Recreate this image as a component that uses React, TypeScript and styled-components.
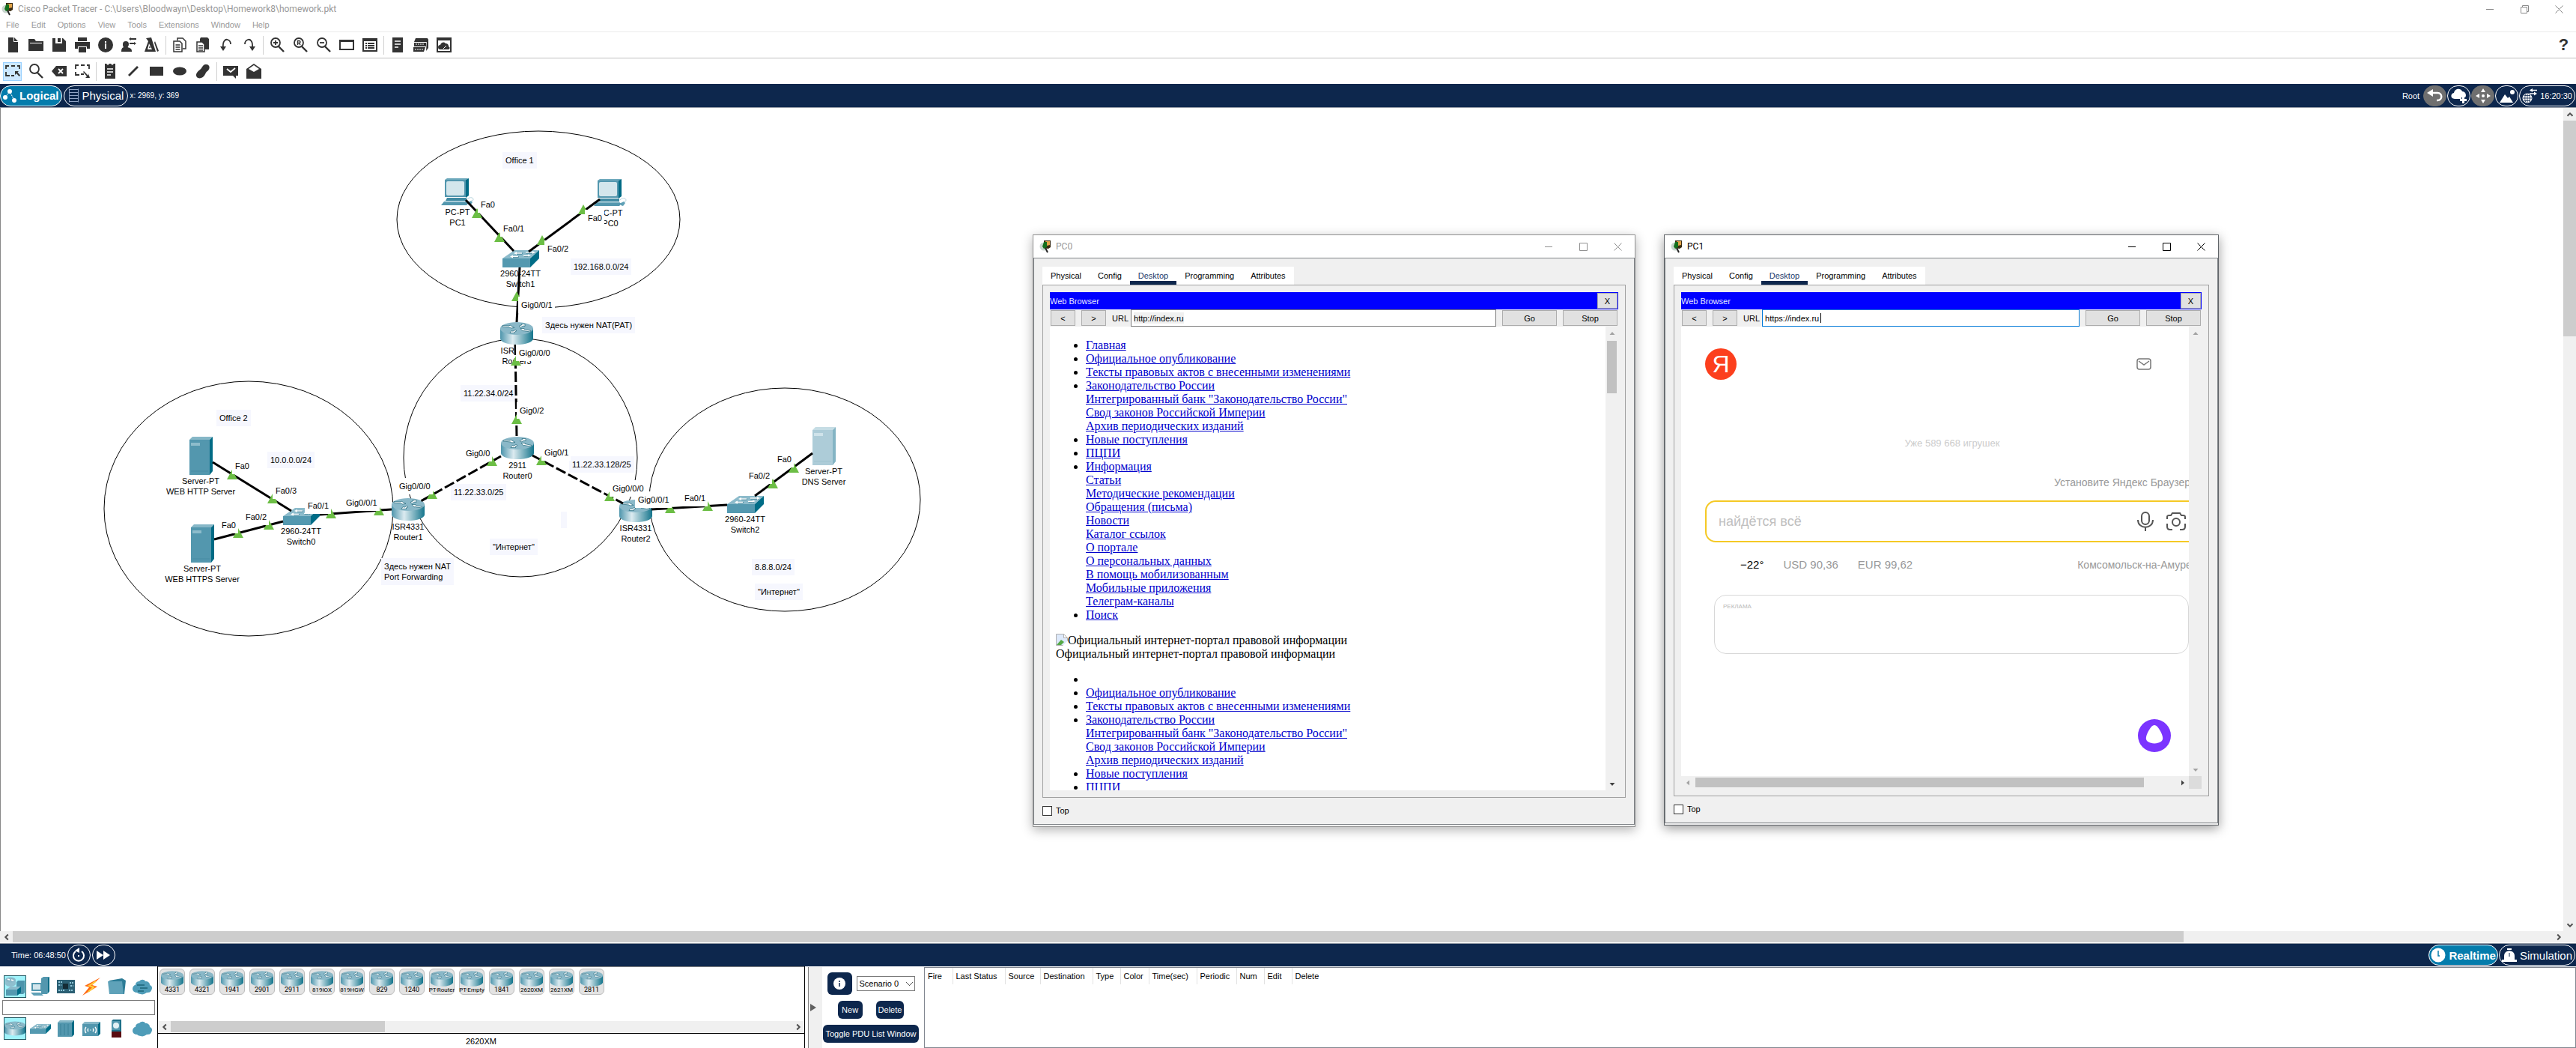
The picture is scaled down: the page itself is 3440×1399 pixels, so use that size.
import React, { useId } from "react";
import styled, { createGlobalStyle, css } from "styled-components";

const navy = "#0d274d";
const ink = "#333333";
const ui = `"Liberation Sans", Arial, sans-serif`;
const caption = `Roboto, "Open Sans", sans-serif`;

const GlobalStyle = createGlobalStyle`
  *, *::before, *::after { box-sizing: border-box; }
  body { margin: 0; background: #fff; font-family: ${ui}; font-size: 11px; color: #000; }
  button, input, select { font: inherit; color: inherit; margin: 0; padding: 0; border: 0; background: none; border-radius: 0; }
  svg { display: block; flex: none; }
`;

/* ---------- shell ---------- */

const Shell = styled.div`
  display: flex;
  flex-direction: column;
  height: 100vh;
  min-height: 640px;
  overflow: hidden;
`;

const TitleBar = styled.header<{ $height: number; $pad: number; $muted?: boolean }>`
  display: flex;
  flex: none;
  align-items: center;
  gap: 6px;
  height: ${(p) => p.$height}px;
  padding-left: ${(p) => p.$pad}px;
  background: #fff;
  color: ${(p) => (p.$muted ? "#999" : "#000")};
  font-family: ${caption};
  font-size: 12px;
`;

const CaptionButtons = styled.div`
  display: flex;
  margin-left: auto;
  height: 100%;
`;

const CaptionButton = styled.button`
  display: flex;
  align-items: center;
  justify-content: center;
  width: 46px;
`;

const MenuBar = styled.nav`
  display: flex;
  flex: none;
  height: 19px;
  padding-bottom: 1px;
  border-bottom: 1px solid #ececec;
`;

const MenuItem = styled.button`
  padding: 0 8px;
  color: #999;
`;

const ToolBar = styled.div<{ $height: number; $line?: boolean }>`
  display: flex;
  flex: none;
  align-items: center;
  height: ${(p) => p.$height}px;
  padding: 0 1px;
  border-bottom: ${(p) => (p.$line ? "1px solid #c0c0c0" : "0")};
`;

const ToolButton = styled.button<{ $on?: boolean }>`
  display: flex;
  align-items: center;
  justify-content: center;
  width: 25px;
  height: 25px;
  margin: 0 3px;
  ${(p) => p.$on && css`background: #cce8ff; outline: 1px solid #99d1ff; outline-offset: -1px;`}
`;

const ToolSeparator = styled.span`
  width: 1px;
  height: 25px;
  margin: 0 2px 0 3px;
  background: #d0d0d0;
`;

const HelpButton = styled.button`
  width: 31px;
  margin-left: auto;
  color: ${ink};
  font-size: 22px;
  font-weight: 700;
`;

const NavyBar = styled.div<{ $height: number; $pad: number }>`
  display: flex;
  flex: none;
  align-items: center;
  gap: 2px;
  height: ${(p) => p.$height}px;
  padding-left: ${(p) => p.$pad}px;
  background: ${navy};
  color: #fff;
`;

const Pill = styled.button<{ $on?: boolean; $grey?: boolean; $pad?: number }>`
  display: flex;
  flex: none;
  align-items: center;
  justify-content: center;
  gap: 4px;
  min-width: 31px;
  height: 28px;
  padding: 0 ${(p) => p.$pad ?? 0}px;
  border: 1px solid ${(p) => (p.$grey ? "#6f6f6f" : "#fff")};
  border-radius: 14px;
  background: ${(p) => (p.$grey ? "#6f6f6f" : p.$on ? "#047cac" : "transparent")};
  white-space: nowrap;
`;

const ModeText = styled.span<{ $bold?: boolean }>`
  font-size: 15px;
  font-weight: ${(p) => (p.$bold ? 700 : 400)};
`;

const Coordinates = styled.span`
  font-size: 10px;
`;

const RightGroup = styled.div`
  display: flex;
  align-items: center;
  gap: 1px;
  margin-left: auto;
  padding-right: 1px;
`;

const RootLabel = styled.span`
  margin-right: 4px;
`;

/* ---------- scroll bars ---------- */

const Track = styled.div<{ $vertical?: boolean; $thick: number; $bg?: string }>`
  display: flex;
  flex: none;
  flex-direction: ${(p) => (p.$vertical ? "column" : "row")};
  ${(p) => (p.$vertical ? "width" : "height")}: ${(p) => p.$thick}px;
  background: ${(p) => p.$bg ?? "#f0f0f0"};
`;

const TrackButton = styled.button`
  display: flex;
  flex: none;
  align-items: center;
  justify-content: center;
  width: 17px;
  height: 17px;
  align-self: center;
`;

const TrackBody = styled.div<{ $vertical?: boolean }>`
  display: flex;
  flex: 1;
  min-width: 0;
  min-height: 0;
  flex-direction: ${(p) => (p.$vertical ? "column" : "row")};
`;

const Thumb = styled.div<{ $share: number; $inset?: number; $dark?: boolean }>`
  flex: 0 0 ${(p) => p.$share}%;
  margin: ${(p) => (p.$inset ?? 0)}px;
  background: ${(p) => (p.$dark ? "#c1c1c1" : "#cdcdcd")};
`;

type Dir = "up" | "down" | "left" | "right";
const turn: Record<Dir, number> = { up: 0, right: 90, down: 180, left: 270 };

const Chevron = ({ dir }: { dir: Dir }) => (
  <svg width="10" height="10" viewBox="0 0 10 10">
    <path d="M1.5 6.8 5 3.3l3.5 3.5" fill="none" stroke="#505050" strokeWidth="2" transform={`rotate(${turn[dir]} 5 5)`} />
  </svg>
);
const Arrow = ({ dir, faint }: { dir: Dir; faint?: boolean }) => (
  <svg width="8" height="8" viewBox="0 0 8 8">
    <path d="M.5 6h7L4 2z" fill={faint ? "#a3a3a3" : "#404040"} transform={`rotate(${turn[dir]} 4 4)`} />
  </svg>
);

/* ---------- toolbar drawings ---------- */

const glyphs: Record<string, React.ReactNode> = {
  new: <path d="M4 0h7v6h6v14H4z M12 0l5 5h-5z" />,
  open: <path d="M0 2h8l2 3h10v13H0z M2 7v1h16V7z" fillRule="evenodd" />,
  save: <path d="M1 1h4v7h9V1h1l4 4v14H1z M8 1h4v5H8z" />,
  print: <path d="M4 0h12v5H4z M0 6h20v9h-4v-3H4v3H0z M5 13h10v7H5z" />,
  info: <g><circle cx="10" cy="10" r="10" /><path d="M9 8h2v7H9z M9 5h2v2H9z" fill="#fff" /></g>,
  user: <path d="M2 9a4 4 0 0 1 8 0c0 2-1 3-1.500 4 3 1 5.500 2 5.500 5v1H0c0-4 1-5 3-6-1-1-1-3-1-4z M10 2l3-2v1h7v2h-7v1z M20 8l-3-2v1h-6v2h6v1z" />,
  activity: <g><path d="M2 1l7-1 6 19H0l5-14z" /><path d="M14 5l5 13-2 1-4-12z" /><path d="M6 8l4 8H4z" fill="#fff" /><circle cx="7" cy="13" r="1" /></g>,
  copy: <g fill="none" stroke={ink} strokeWidth="1.500"><path d="M7 4V1h7l4 4v10h-4" /><path d="M2 5h8l3 3v11H2z" fill="#fff" /><path d="M4.500 10h6M4.500 13h6M4.500 16h6" /></g>,
  paste: <g><path d="M7 0h9l2 2v14H6V2z" /><path d="M2 6h7l3 3v10H2z" fill="#fff" stroke={ink} strokeWidth="1.500" /><path d="M4 11h6M4 14h6M4 17h6" stroke={ink} strokeWidth="1.300" /></g>,
  undo: <g><path d="M6 14C5 5 9 2 12 3c3 1 4 3 4 6" fill="none" stroke={ink} strokeWidth="1.800" /><path d="M2 12h8l-4 6z" /></g>,
  redo: <g><path d="M14 14c1-9-3-12-6-11C5 4 4 6 4 9" fill="none" stroke={ink} strokeWidth="1.800" /><path d="M18 12h-8l4 6z" /></g>,
  window: <path d="M0 3h20v14H0z M2 6v9h16V6z" fillRule="evenodd" />,
  list: <g><path d="M0 1h20v18H0z M2 5v12h16V5z" fillRule="evenodd" /><path d="M4 7h2v2H4z M4 10h2v2H4z M4 13h2v2H4z M7 7h9v2H7z M7 10h9v2H7z M7 13h9v2H7z" /></g>,
  doc: <g><path d="M3 0h14v20H3z" /><path d="M6 5h8M6 9h8M6 13h5" stroke="#fff" strokeWidth="1.600" /></g>,
  racks: <g><path d="M3 1h16v5H1z" /><path d="M1 7h16v5H1z M0 13h16l-2 6H0z M18 3l2-1v12l-3 4z" /><path d="M3 9h12M2 16h11" stroke="#fff" strokeDasharray="2 1" /></g>,
  cloudpic: <g><path d="M0 0h20v20H0z" /><path d="M2 4h16v14H2z" fill="#fff" /><path d="M5 16a3 3 0 0 1 0-6 4 4 0 0 1 7-2 4 4 0 0 1 4 4 2 2 0 0 1-1 4z" /><path d="M9 15l4-4" stroke="#fff" /></g>,
  magnify: <g fill="none" stroke={ink}><circle cx="8" cy="7" r="6" strokeWidth="1.800" /><path d="M12 12l7 7" strokeWidth="2.400" /></g>,
  erase: <g><path d="M6 3h14v14H6L0 10z" /><path d="M9 7l6 6M15 7l-6 6" stroke="#fff" strokeWidth="1.800" /></g>,
  select: <g><path d="M1 7V3h4M8 3h5M16 3h3v4M1 11v5h5M8 16h4" fill="none" stroke={ink} strokeWidth="1.800" /><path d="M13 10h5l-1.500 1.500 3.500 4-1.500 1.500-3.500-4-2 2z" /></g>,
  resize: <g><path d="M1 7V2h4M8 2h5M16 2h3v5M1 11v4h5M8 14h4" fill="none" stroke={ink} strokeWidth="1.800" /><path d="M12 10l6 6v-3l2 6h-6l2-2-5-6z" /></g>,
  note: <g><path d="M3 0h2l2 2 2-2h2l2 2 2-2h2v20H3z" /><path d="M6 7h8M6 11h8M6 15h5" stroke="#fff" strokeWidth="1.600" /></g>,
  line: <path d="M3 15L15 3l2 2L5 17z" />,
  rect: <path d="M1 4h18v12H1z" />,
  ellipse: <ellipse cx="10" cy="10" rx="9" ry="5.500" />,
  blob: <path d="M13 1c6-1 7 5 4 8-2 2-2 1-4 5-2 5-8 7-11 4s1-8 4-10 3-6 7-7z" />,
  mail: <g><path d="M0 3h20v13h-3v4l-4-4H0z" /><path d="M5 7l5 4 6-5" fill="none" stroke="#fff" strokeWidth="1.800" /></g>,
  openmail: <g><path d="M0 7l10-7 10 7v13H0z" /><path d="M3 7l7-5 7 5-7 4z" fill="#fff" /></g>,
};

const zoomMark: Record<string, React.ReactNode> = {
  zoomin: <path d="M5 7h6M8 4v6" stroke={ink} strokeWidth="1.800" />,
  zoomreset: <path d="M6.500 10V4.500h2a1.500 1.500 0 0 1 0 3h-2M8.500 7.500l1.500 2.500" stroke={ink} fill="none" strokeWidth="1.400" />,
  zoomout: <path d="M5 7h6" stroke={ink} strokeWidth="1.800" />,
};

const Glyph = ({ name }: { name: string }) => (
  <svg width="20" height="20" viewBox="0 0 20 20" fill={ink}>
    {zoomMark[name] ? <>{glyphs.magnify}{zoomMark[name]}</> : glyphs[name]}
  </svg>
);

const mainTools = ["new", "open", "save", "print", "info", "user", "activity", "|", "copy", "paste", "undo", "redo", "|", "zoomin", "zoomreset", "zoomout", "window", "list", "|", "doc", "racks", "cloudpic"];
const drawTools = ["select", "magnify", "erase", "resize", "|", "note", "line", "rect", "ellipse", "blob", "|", "mail", "openmail"];

const Tools = ({ items }: { items: string[] }) => (
  <>
    {items.map((name, i) =>
      name === "|" ? <ToolSeparator key={i} /> : (
        <ToolButton key={i} $on={name === "select"} aria-label={name}><Glyph name={name} /></ToolButton>
      )
    )}
  </>
);

const AppMark = () => (
  <svg width="16" height="18" viewBox="0 0 16 18">
    <circle cx="6" cy="9" r="5.500" fill="#c9d6cf" />
    <path d="M6 1h9v9l-3 2-6-1z" fill="#3a2b12" />
    <path d="M8 2h6v5l-4 1z" fill="#e2a347" />
    <path d="M6 3h4v7l-4 2-2-3z" fill="#14701d" />
    <path d="M8 11l3 6" stroke="#222" strokeWidth="2" />
  </svg>
);

const WindowButtons = ({ color, restore }: { color: string; restore?: boolean }) => (
  <CaptionButtons>
    <CaptionButton aria-label="Minimize"><svg width="10" height="10"><path d="M0 5.500h10" stroke={color} /></svg></CaptionButton>
    <CaptionButton aria-label="Maximize">
      <svg width="11" height="11" fill="none" stroke={color}>
        {restore ? <path d="M.5 2.500h8v8h-8zM2.500 2V.5h8v8H9" /> : <path d="M.5.5h10v10H.5z" />}
      </svg>
    </CaptionButton>
    <CaptionButton aria-label="Close"><svg width="11" height="11"><path d="M.5.5l10 10M10.500.5l-10 10" stroke={color} /></svg></CaptionButton>
  </CaptionButtons>
);

/* ---------- devices ---------- */

type Kind = "router" | "switch" | "server" | "pc" | "dns";

const sizes: Record<Kind, [number, number]> = { router: [44, 30], switch: [49, 23], server: [31, 51], dns: [31, 51], pc: [44, 37] };

const DeviceArt = ({ kind, width, height }: { kind: Kind; width?: number; height?: number }) => {
  const id = useId();
  const [w, h] = sizes[kind];
  const light = kind === "dns";
  return (
    <svg width={width ?? w} height={height ?? h} viewBox={`0 0 ${w} ${h}`}>
      {kind === "router" && (
        <g>
          <linearGradient id={id}><stop offset="0" stopColor="#4d95ac" /><stop offset=".38" stopColor="#dcebf0" /><stop offset="1" stopColor="#15758c" /></linearGradient>
          <path d="M0 8v14a22 8 0 0 0 44 0V8z" fill={`url(#${id})`} />
          <ellipse cx="22" cy="8.500" rx="22" ry="8.500" fill="#8ab8c8" />
          <g fill="#fff" stroke="#1d6478" strokeWidth=".7">
            <path d="M3 4.500l9 .5 1-1 6 3.500-5 .5-1-1-10-1z" />
            <path d="M25 5.500l4-2-1-1h5v3l-2-.5-4 2z" />
            <path d="M27 8.500l5 0 0 1 9 2-1 1.500-9-1.500-1 .5z" />
            <path d="M13 14.500l2-3 2 .7 3-1.700 2 1-3 2 1 .7z" />
          </g>
        </g>
      )}
      {kind === "switch" && (
        <g>
          <path d="M0 11L16 0h33L37 11z" fill="#8cbbcb" />
          <path d="M0 11h37v12H0z" fill="#5499b0" />
          <path d="M37 11L49 0v11L37 23z" fill="#006d87" />
          <path d="M17 4h9M31 3h11M12 8.500h9M28 7.500h7" stroke="#2a7389" strokeWidth="2" transform="translate(.5 .6)" />
          <path d="M17 4h9M31 3h11M12 8.500h9M28 7.500h7" stroke="#fff" strokeWidth="1.300" />
          <path d="M15 4l4-2v4zM44 3l-4-2v4zM10 8.500l4-2v4zM38 7l-4-1.500v3z" fill="#fff" />
        </g>
      )}
      {(kind === "server" || kind === "dns") && (
        <g>
          <path d="M0 4l4-4h27l-4 4z" fill={light ? "#c6dde5" : "#86b7c7"} />
          <path d="M0 4h27v47H0z" fill={light ? "#adccd8" : "#5397ae"} />
          <path d="M27 4l4-4v46l-4 5z" fill={light ? "#84b4c4" : "#006b85"} />
          <path d="M2 8h12v4H2z" fill={light ? "#cfe3ea" : "#8dbccb"} />
          <path d="M2 46h23" stroke={light ? "#9fc3d0" : "#468ba3"} />
        </g>
      )}
      {kind === "pc" && (
        <g>
          <path d="M5 2l3-2h29l-4 2z" fill="#6ea9bc" />
          <path d="M33 2l4-2v23l-4 3z" fill="#006b85" />
          <path d="M5 2h28v23H5z" fill="#5397ae" />
          <rect x="7" y="4" width="24" height="19" rx="2" fill="#d3e6ec" />
          <path d="M8 26h26v4H6z" fill="#3f8aa2" />
          <path d="M4 31h30l3 2-3 3H0z" fill="#5397ae" />
          <path d="M4 31h30" stroke="#a5cbd7" />
          <path d="M36 32l4-2 2 2-3 4-3-1z" fill="#5fa0b6" />
          <path d="M35 28c2-3 8-3 8 0s-3 1-3 3" fill="none" stroke="#b9d5de" />
        </g>
      )}
    </svg>
  );
};

/* Topology coordinates are window coordinates; the canvas begins under the navigation bar. */
const CANVAS_TOP = 144;

const Workspace = styled.section`
  display: flex;
  flex: 1;
  flex-direction: column;
  min-height: 0;
  border-top: 1px solid #8f97a3;
  border-bottom: 1px solid #8f97a3;
  padding-bottom: 1px;
`;

const WorkRow = styled.div`
  display: flex;
  flex: 1;
  min-height: 0;
`;

const Canvas = styled.div`
  position: relative;
  flex: 1;
  overflow: hidden;
  background: #fff;
  line-height: 14px;
  box-shadow: inset 1px 0 #888;
`;

const Layer = styled.svg`
  position: absolute;
  left: 0;
  top: 0;
  width: 100%;
  height: 100%;
`;

const Node = styled.div<{ $x: number; $y: number }>`
  position: absolute;
  left: ${(p) => p.$x - 60}px;
  top: ${(p) => p.$y - CANVAS_TOP}px;
  display: flex;
  flex-direction: column;
  align-items: center;
  gap: 1px;
  width: 120px;
  text-align: center;
`;

const Tag = styled.div<{ $x: number; $y: number; $note?: boolean }>`
  position: absolute;
  left: ${(p) => p.$x - 4}px;
  top: ${(p) => p.$y - 11 - CANVAS_TOP}px;
  min-height: 22px;
  min-width: 8px;
  padding: 4px ${(p) => (p.$note ? 4 : 3)}px 4px 4px;
  background: ${(p) => (p.$note ? "#f6f7fe" : "#fff")};
  white-space: pre;
`;

const areas = [
  [719, 293, 189, 118], [695, 611, 156, 159], [332, 679, 193, 170], [1048, 667, 181, 149],
];

const nodes: [Kind, number, number, string, string][] = [
  ["pc", 611, 238, "PC-PT", "PC1"],
  ["pc", 815, 239, "PC-PT", "PC0"],
  ["switch", 695, 334, "2960-24TT", "Switch1"],
  ["router", 690, 430, "ISR4331", "Router3"],
  ["router", 691, 583, "2911", "Router0"],
  ["router", 545, 665, "ISR4331", "Router1"],
  ["router", 849, 667, "ISR4331", "Router2"],
  ["server", 268, 583, "Server-PT", "WEB HTTP Server"],
  ["server", 270, 700, "Server-PT", "WEB HTTPS Server"],
  ["switch", 402, 678, "2960-24TT", "Switch0"],
  ["switch", 995, 662, "2960-24TT", "Switch2"],
  ["dns", 1100, 570, "Server-PT", "DNS Server"],
];

const links: [number, number, number, number, boolean?][] = [
  [622, 267, 686, 335], [801, 266, 706, 336], [694, 357, 690, 430], [688, 460, 690, 583, true],
  [284, 617, 389, 682], [286, 720, 378, 696], [427, 687, 523, 680], [669, 609, 562, 669, true],
  [711, 608, 832, 672, true], [870, 680, 971, 674], [1008, 662, 1085, 605],
];

const lights = [
  [637, 285], [667, 317], [779, 280], [724, 321], [690, 396], [689, 482], [690, 560], [657, 616], [723, 615],
  [577, 660], [814, 663], [895, 679], [506, 682], [310, 634], [364, 666], [359, 701], [318, 712], [442, 686],
  [945, 676], [1032, 646], [1060, 625],
];

const notes: [number, number, string][] = [
  [675, 214, "Office 1"], [766, 356, "192.168.0.0/24"], [728, 434, "Здесь нужен NAT(PAT)"],
  [619, 525, "11.22.34.0/24"], [764, 620, "11.22.33.128/25"], [606, 657, "11.22.33.0/25"],
  [753, 694, ""], [658, 730, "\"Интернет\""], [513, 756, "Здесь нужен NAT\nPort Forwarding"],
  [293, 558, "Office 2"], [361, 614, "10.0.0.0/24"], [1008, 757, "8.8.8.0/24"], [1012, 790, "\"Интернет\""],
];

const ports: [number, number, string][] = [
  [642, 273, "Fa0"], [672, 305, "Fa0/1"], [731, 332, "Fa0/2"], [785, 291, "Fa0"], [696, 407, "Gig0/0/1"],
  [693, 471, "Gig0/0/0"], [694, 548, "Gig0/2"], [622, 605, "Gig0/0"], [727, 604, "Gig0/1"], [533, 649, "Gig0/0/0"],
  [818, 652, "Gig0/0/0"], [852, 667, "Gig0/0/1"], [914, 665, "Fa0/1"], [1000, 635, "Fa0/2"], [1038, 613, "Fa0"],
  [314, 622, "Fa0"], [368, 655, "Fa0/3"], [411, 675, "Fa0/1"], [328, 690, "Fa0/2"], [296, 701, "Fa0"], [462, 671, "Gig0/0/1"],
];

const Topology = () => (
  <>
    <Layer>
      <g transform={`translate(0 ${-CANVAS_TOP})`} fill="none" stroke="#000">
        {areas.map(([cx, cy, rx, ry]) => <ellipse key={cx} cx={cx} cy={cy} rx={rx} ry={ry} />)}
      </g>
    </Layer>
    {notes.map(([x, y, text]) => <Tag key={`${x}-${y}`} $x={x} $y={y} $note>{text}</Tag>)}
    {nodes.map(([kind, x, y, model, name]) => (
      <Node key={name} $x={x} $y={y}>
        <DeviceArt kind={kind} />
        <div>{model}<br />{name}</div>
      </Node>
    ))}
    <Layer>
      <g transform={`translate(0 ${-CANVAS_TOP})`}>
        {links.map(([x1, y1, x2, y2, dashed]) => (
          <line key={`${x1}-${y1}`} x1={x1} y1={y1} x2={x2} y2={y2} stroke="#000" strokeWidth="3" strokeDasharray={dashed ? "14 4" : undefined} />
        ))}
        {lights.map(([x, y]) => <path key={`${x}-${y}`} d={`M${x} ${y - 7}l7 13h-14z`} fill="#6cbe45" />)}
      </g>
    </Layer>
    {ports.map(([x, y, text]) => <Tag key={`${x}-${y}`} $x={x} $y={y}>{text}</Tag>)}
  </>
);

/* ---------- device windows ---------- */

const DeviceFrame = styled.article<{ $x: number; $w: number; $h: number; $active?: boolean }>`
  position: absolute;
  left: ${(p) => p.$x}px;
  top: 169px;
  display: flex;
  flex-direction: column;
  width: ${(p) => p.$w}px;
  height: ${(p) => p.$h}px;
  border: 1px solid ${(p) => (p.$active ? "#606468" : "#909090")};
  background: #f0f0f0;
  box-shadow: 0 4px 14px rgba(0, 0, 0, ${(p) => (p.$active ? 0.4 : 0.3)});
  line-height: normal;
`;

const DeviceBody = styled.div`
  display: flex;
  flex: 1;
  flex-direction: column;
  min-height: 0;
  padding: 11px;
  border: 1px solid #808488;
`;

const Tabs = styled.div`
  display: flex;
  align-self: flex-start;
  height: 24px;
  background: #fff;
`;

const Tab = styled.button<{ $on?: boolean }>`
  padding: 0 11px;
  color: ${(p) => (p.$on ? "#1c3a6a" : "#000")};
  box-shadow: ${(p) => (p.$on ? `inset 0 -5px ${navy}` : "none")};
`;

const Panel = styled.div`
  display: flex;
  flex: 1;
  flex-direction: column;
  min-height: 0;
  padding: 9px;
  border: 1px solid #a0a0a0;
`;

const BrowserTitle = styled.div`
  display: flex;
  flex: none;
  align-items: center;
  justify-content: space-between;
  height: 23px;
  padding-right: 1px;
  background: #0000ff;
  color: #e6e6ff;
`;

const GreyButton = styled.button<{ $w: number }>`
  flex: none;
  width: ${(p) => p.$w}px;
  height: 21px;
  border: 1px solid #adadad;
  background: #e1e1e1;
  color: #000;
`;

const AddressRow = styled.div`
  display: flex;
  flex: none;
  align-items: center;
  gap: 8px;
  height: 23px;
  padding: 0 1px;
`;

const AddressLabel = styled.label`
  display: flex;
  flex: 1;
  align-items: center;
  gap: 3px;
`;

const Address = styled.input<{ $active?: boolean }>`
  flex: 1;
  min-width: 0;
  height: 23px;
  padding: 0 3px;
  border: 1px solid ${(p) => (p.$active ? "#0078d7" : "#7a7a7a")};
  background: #fff linear-gradient(${(p) => (p.$active ? "#000, #000" : "#f0f0f0, #f0f0f0")}) no-repeat;
  background-size: ${(p) => (p.$active ? "1px 13px" : "67px 15px")};
  background-position: ${(p) => (p.$active ? "77px" : "3px")} center;
`;

const PageArea = styled.div`
  display: flex;
  flex: 1;
  min-height: 0;
`;

const PageView = styled.div`
  position: relative;
  flex: 1;
  min-width: 0;
  overflow: hidden;
  background: #fff;
`;

const TopCheck = styled.label`
  display: flex;
  flex: none;
  align-items: center;
  gap: 5px;
  padding-top: 10px;
  height: 24px;
`;

const CheckBox = styled.input`
  appearance: none;
  width: 13px;
  height: 13px;
  border: 1px solid #333;
  background: #fff;
`;

const Foot = styled.div`
  height: 2px;
`;

interface DeviceWindowProps {
  name: string; url: string; x: number; w: number; h: number; active?: boolean; children: React.ReactNode;
}

const DeviceWindow = ({ name, url, x, w, h, active, children }: DeviceWindowProps) => (
  <DeviceFrame $x={x} $w={w} $h={h} $active={active}>
    <TitleBar $height={30} $pad={8} $muted={!active}>
      <AppMark />{name}
      <WindowButtons color={active ? "#000" : "#909090"} />
    </TitleBar>
    <DeviceBody>
      <Tabs>
        {["Physical", "Config", "Desktop", "Programming", "Attributes"].map((t) => <Tab key={t} $on={t === "Desktop"}>{t}</Tab>)}
      </Tabs>
      <Panel>
        <BrowserTitle>Web Browser<GreyButton $w={27}>X</GreyButton></BrowserTitle>
        <AddressRow>
          <GreyButton $w={33}>&lt;</GreyButton>
          <GreyButton $w={33}>&gt;</GreyButton>
          <AddressLabel>URL<Address $active={active} defaultValue={url} /></AddressLabel>
          <GreyButton $w={73}>Go</GreyButton>
          <GreyButton $w={73}>Stop</GreyButton>
        </AddressRow>
        {children}
      </Panel>
      <TopCheck><CheckBox type="checkbox" />Top</TopCheck>
    </DeviceBody>
    <Foot />
  </DeviceFrame>
);

const Portal = styled.div`
  padding: 16px 8px 0;
  font: 16px/18px "Liberation Serif", "Times New Roman", serif;
  ul { margin: 0 0 16px; padding-left: 40px; }
  p { margin: 0 0 16px; }
`;

const PortalLink = styled.a`
  color: #0000cc;
  text-decoration: underline;
`;

const BrokenMark = styled.svg`
  display: inline-block;
  vertical-align: -2px;
`;

const MissingImage = () => (
  <BrokenMark width="16" height="16" viewBox="0 0 16 16">
    <path d="M.5.5h10l5 5v10H.5z" fill="#dde9fb" stroke="#b0b0b0" />
    <path d="M10.500.5v5h5z" fill="#fff" stroke="#b0b0b0" />
    <path d="M1 15l6-7 4 3-4 4z" fill="#55a845" />
    <path d="M9 16l7-7v7z" fill="#fff" />
  </BrokenMark>
);

const law = ["Законодательство России", "Интегрированный банк \"Законодательство России\"", "Свод законов Российской Империи", "Архив периодических изданий"];
const info = ["Информация", "Статьи", "Методические рекомендации", "Обращения (письма)", "Новости", "Каталог ссылок", "О портале", "О персональных данных", "В помощь мобилизованным", "Мобильные приложения", "Телеграм-каналы"];
const menuTop = [["Главная"], ["Официальное опубликование"], ["Тексты правовых актов с внесенными изменениями"], law, ["Новые поступления"], ["ПЦПИ"], info, ["Поиск"]];
const menuBottom = [[], ["Официальное опубликование"], ["Тексты правовых актов с внесенными изменениями"], law, ["Новые поступления"], ["ПЦПИ"]];

const LinkList = ({ groups }: { groups: string[][] }) => (
  <ul>
    {groups.map((group, i) => (
      <li key={i}>
        {group.length === 0 && "\u00a0"}
        {group.map((text, j) => <React.Fragment key={text}>{j > 0 && <br />}<PortalLink href="#">{text}</PortalLink></React.Fragment>)}
      </li>
    ))}
  </ul>
);

const PortalPage = () => (
  <PageArea>
    <PageView>
      <Portal>
        <LinkList groups={menuTop} />
        <p><MissingImage />Официальный интернет-портал правовой информации<br />Официальный интернет-портал правовой информации</p>
        <LinkList groups={menuBottom} />
      </Portal>
    </PageView>
    <Track $vertical $thick={17}>
      <TrackButton aria-label="Scroll up"><Arrow dir="up" faint /></TrackButton>
      <TrackBody $vertical><Thumb $share={12} $inset={2} $dark /></TrackBody>
      <TrackButton aria-label="Scroll down"><Arrow dir="down" /></TrackButton>
    </Track>
  </PageArea>
);

const SearchPage = styled.div`
  display: flex;
  flex-direction: column;
  width: 724px;
  padding: 29px 0 0 32px;
  color: #999;
  font-size: 14px;
  line-height: 18px;
`;

const SearchHeader = styled.div`
  display: flex;
  align-items: center;
  justify-content: space-between;
  padding-right: 96px;
`;

const Logo = styled.a`
  display: flex;
  align-items: center;
  justify-content: center;
  width: 42px;
  height: 42px;
  border-radius: 50%;
  background: #fc3f1d;
  color: #fff;
  font-size: 32px;
  line-height: 42px;
  text-decoration: none;
`;

const Counter = styled.div`
  margin: 76px 32px 34px 0;
  color: #ccc;
  font-size: 13px;
  text-align: center;
`;

const Promo = styled.a`
  margin: 0 0 15px 466px;
  color: #999;
  text-decoration: none;
  white-space: nowrap;
`;

const SearchBox = styled.div`
  display: flex;
  align-items: center;
  gap: 16px;
  height: 56px;
  padding: 0 48px 0 16px;
  border: 2px solid #f5c925;
  border-radius: 14px;
`;

const SearchInput = styled.input`
  flex: 1;
  min-width: 0;
  font-size: 18px;
  &::placeholder { color: #c0c0c0; opacity: 1; }
`;

const Facts = styled.div`
  display: flex;
  gap: 26px;
  padding: 20px 0 30px 47px;
  font-size: 15px;
  line-height: 20px;
`;

const Degrees = styled.span`
  color: #000;
`;

const City = styled.span`
  margin-left: 194px;
  font-size: 14px;
  white-space: nowrap;
`;

const Ad = styled.div`
  height: 79px;
  margin: 0 46px 0 12px;
  padding: 6px 11px;
  border: 1px solid #d8d8d8;
  border-radius: 16px;
  color: #b8b8b8;
  font-size: 8px;
`;

const Assistant = styled.button`
  position: absolute;
  right: 24px;
  bottom: 32px;
`;

const Corner = styled.div`
  width: 17px;
  background: #dcdcdc;
`;

const YandexPage = () => (
  <>
    <PageArea>
      <PageView>
        <SearchPage>
          <SearchHeader>
            <Logo href="#">Я</Logo>
            <svg width="20" height="16" viewBox="0 0 20 16" fill="none" stroke="#777" strokeWidth="1.500">
              <rect x="1" y="1" width="18" height="14" rx="3" /><path d="M3 4l7 5 7-5" />
            </svg>
          </SearchHeader>
          <Counter>Уже 589 668 игрушек</Counter>
          <Promo href="#">Установите Яндекс Браузер</Promo>
          <SearchBox>
            <SearchInput aria-label="Поиск" placeholder="найдётся всё" />
            <svg width="24" height="26" viewBox="0 0 24 26" fill="none" stroke="#555" strokeWidth="2">
              <rect x="7" y="1" width="10" height="16" rx="5" /><path d="M2 11c0 13 20 13 20 0M12 21v5" />
            </svg>
            <svg width="26" height="24" viewBox="0 0 26 24" fill="none" stroke="#555" strokeWidth="2">
              <path d="M1 9V6c0-2 1-2 3-2h2l2-3h10l2 3h2c2 0 3 0 3 2v3M1 15v4c0 3 1 4 4 4h3M25 15v4c0 3-1 4-4 4h-3" /><circle cx="13" cy="13" r="5" />
            </svg>
          </SearchBox>
          <Facts><Degrees>−22°</Degrees><span>USD 90,36</span><span>EUR 99,62</span><City>Комсомольск-на-Амуре</City></Facts>
          <Ad>РЕКЛАМА</Ad>
        </SearchPage>
        <Assistant aria-label="Алиса">
          <svg width="44" height="44" viewBox="0 0 44 44">
            <circle cx="22" cy="22" r="22" fill="#7b34ff" />
            <path d="M22 8c-3 0-6 4-9 10-3 7-5 13 9 14.500C36 31 34 25 31 18c-3-6-6-10-9-10z" fill="#fff" />
          </svg>
        </Assistant>
      </PageView>
      <Track $vertical $thick={17}>
        <TrackButton aria-label="Scroll up"><Arrow dir="up" faint /></TrackButton>
        <TrackBody $vertical />
        <TrackButton aria-label="Scroll down"><Arrow dir="down" faint /></TrackButton>
      </Track>
    </PageArea>
    <Track $thick={17}>
      <TrackButton aria-label="Scroll left"><Arrow dir="left" faint /></TrackButton>
      <TrackBody><Thumb $share={93} $inset={2} $dark /></TrackBody>
      <TrackButton aria-label="Scroll right"><Arrow dir="right" /></TrackButton>
      <Corner />
    </Track>
  </>
);

/* ---------- bottom dock ---------- */

const Dock = styled.footer`
  display: flex;
  flex: none;
  height: 109px;
`;

const Categories = styled.div`
  display: flex;
  flex: none;
  flex-direction: column;
  gap: 3px;
  width: 210px;
  padding: 12px 3px 0;
`;

const CategoryRow = styled.div`
  display: flex;
  gap: 4px;
  padding-left: 2px;
`;

const Category = styled.button<{ $on?: boolean }>`
  display: flex;
  align-items: center;
  justify-content: center;
  width: 30px;
  height: 30px;
  ${(p) => p.$on && css`background: #a0f3fb; border: 1px solid #1f5560;`}
`;

const DeviceSearch = styled.input`
  height: 20px;
  border: 1px solid #7a7a7a;
`;

const Devices = styled.div`
  display: flex;
  flex: none;
  flex-direction: column;
  width: 865px;
  border: solid #000;
  border-width: 0 1px 0 1px;
  box-shadow: inset 0 1px #808080;
`;

const DeviceGrid = styled.div`
  display: flex;
  flex: 1;
  gap: 6px;
  padding: 3px 2px;
`;

const Model = styled.button<{ $long?: boolean }>`
  display: flex;
  flex-direction: column;
  align-items: center;
  justify-content: space-between;
  width: 34px;
  height: 35px;
  padding: 2px 0 1px;
  border: 1px solid #bcbcbc;
  border-radius: 6px;
  background: #e3e3e3;
  font: ${(p) => (p.$long ? 8 : 9)}px/9px Roboto, sans-serif;
  white-space: nowrap;
`;

const Selected = styled.div`
  height: 20px;
  margin-top: 1px;
  border-top: 1px solid #000;
  line-height: 20px;
  text-align: center;
`;

const Splitter = styled.button`
  display: flex;
  align-items: center;
  flex: none;
  width: 19px;
  margin: 1px 0 0 4px;
  padding-left: 2px;
  border-left: 1px solid #808080;
  background: #f0f0f0;
`;

const Scenario = styled.div`
  display: flex;
  flex: none;
  flex-direction: column;
  align-items: center;
  gap: 8px;
  width: 136px;
  padding: 8px 7px 0 1px;
`;

const ScenarioRow = styled.div<{ $gap: number }>`
  display: flex;
  align-items: center;
  gap: ${(p) => p.$gap}px;
`;

const NavyButton = styled.button<{ $h: number }>`
  display: flex;
  align-items: center;
  justify-content: center;
  min-width: 33px;
  height: ${(p) => p.$h}px;
  padding: 0 3px;
  border-radius: 6px;
  background: ${navy};
  color: #fff;
  white-space: nowrap;
`;

const ScenarioSelect = styled.select`
  width: 78px;
  height: 20px;
  padding-left: 3px;
  border: 1px solid #7a7a7a;
  appearance: none;
  background-color: #fff;
  background-image: linear-gradient(45deg, transparent 42%, #555 42% 58%, transparent 58%), linear-gradient(-45deg, transparent 42%, #555 42% 58%, transparent 58%);
  background-size: 5px 5px, 5px 5px;
  background-position: 65px 7px, 69px 7px;
  background-repeat: no-repeat;
`;

const PduPane = styled.div`
  flex: 1;
  min-width: 0;
  margin-top: 1px;
  border: 1px solid #828790;
`;

const PduTable = styled.table`
  width: 100%;
  table-layout: fixed;
  border-collapse: collapse;
`;

const PduHead = styled.th<{ $w?: number }>`
  width: ${(p) => (p.$w ? `${p.$w}px` : "auto")};
  height: 22px;
  padding: 0 0 0 4px;
  border-right: 1px solid ${(p) => (p.$w ? "#e2e2e2" : "transparent")};
  font-weight: 400;
  text-align: left;
  white-space: nowrap;
`;

const models = ["4331", "4321", "1941", "2901", "2911", "819IOX", "819HGW", "829", "1240", "PT-Router", "PT-Empty", "1841", "2620XM", "2621XM", "2811"];
const columns: [string, number?][] = [["Fire", 37], ["Last Status", 70], ["Source", 47], ["Destination", 70], ["Type", 37], ["Color", 38], ["Time(sec)", 64], ["Periodic", 53], ["Num", 37], ["Edit", 37], ["Delete"]];

const Art = ({ children }: { children: React.ReactNode }) => <svg width="28" height="28" viewBox="0 0 28 28">{children}</svg>;
const cloud = <path d="M7 22c-3 0-6-2-6-5s2-5 4-5c0-4 3-5 5-5 2-3 7-3 8 0 4 0 6 2 6 5 3 1 4 4 2 7-1 3-4 3-6 3-3 2-6 3-8 2-2 0-4-1-5-2z" fill="#4e9cb8" />;

const categories: React.ReactNode[] = [
  <Art><path d="M16 8l2-2h9v16l-2 2h-9z" fill="#4e94ab" /><path d="M1 5v6c2 4 12 4 14 0V5c-2 4-12 4-14 0z" fill="#8fbfce" /><ellipse cx="8" cy="5" rx="7" ry="3.500" fill="#8ab8c8" /><path d="M4 4l3 1M9 5l3 1" stroke="#fff" strokeWidth="1.500" /><path d="M2 18l6-4h14l-5 4z" fill="#8cbbcb" /><path d="M2 18h15v8H2z" fill="#5499b0" /><path d="M17 18l5-4v8l-5 4z" fill="#006d87" /></Art>,
  <Art><path d="M15 3l3-2h8v19l-3 4h-8z" fill="#5397ae" /><path d="M24 3l2-2v19l-2 3z" fill="#006b85" /><path d="M2 9h14v11H2z" fill="#5397ae" /><path d="M4 11h10v7H4z" fill="#d3e6ec" /><path d="M1 22h13l4 4H5z" fill="#5fa0b6" /></Art>,
  <Art><path d="M2 5h24v18H2z" fill="#2b5f73" /><path d="M10 10h7v7h-7z" fill="#142b35" /><path d="M4 8h5M4 12h4M4 19h9M19 9h5M20 13h4M18 19h6" stroke="#8cc3d6" strokeWidth="2" strokeDasharray="2 1" /></Art>,
  <Art><path d="M26 2L5 13l6 2-9 11 20-12-7-2z" fill="#ff6a13" /><path d="M20 7l-9 6 6 2-7 6" fill="none" stroke="#ffcf3e" strokeWidth="2" /></Art>,
  <Art><path d="M4 6l17-3 5 3-2 18H6z" fill="#2c7c96" /><path d="M2 7h19l2 17H4z" fill="#5fa2b9" /></Art>,
  <Art>{cloud}<path d="M7 12h10M11 16h10M8 20h8" stroke="#1d6478" strokeWidth="1.500" /></Art>,
];
const subcategories: React.ReactNode[] = [
  <DeviceArt kind="router" width={28} height={20} />,
  <DeviceArt kind="switch" width={28} height={15} />,
  <Art><path d="M3 6l3-3h19l-3 3z" fill="#86b7c7" /><path d="M3 6h19v19H3z" fill="#5397ae" /><path d="M22 6l3-3v19l-3 3z" fill="#006b85" /><path d="M7 8v15M12 8v15M17 8v15" stroke="#3b8198" /></Art>,
  <Art><path d="M2 8l3-3h21l-3 3z" fill="#86b7c7" /><path d="M2 8h21v16H2z" fill="#5397ae" /><path d="M23 8l3-3v16l-3 3z" fill="#006b85" /><path d="M7 12c-2 2-2 6 0 8M10 14c-1 1-1 3 0 4M16 14c1 1 1 3 0 4M19 12c2 2 2 6 0 8M12.500 16h1" fill="none" stroke="#fff" strokeWidth="1.500" /></Art>,
  <Art><path d="M7 4l2-2h11v22l-2 2H7z" fill="#1d6f88" /><path d="M7 4h11v12H7z" fill="#5397ae" /><path d="M7 18h13v8H7z" fill="#5a0c10" /><circle cx="13" cy="10" r="4" fill="#e4f1f5" /></Art>,
  <Art>{cloud}</Art>,
];

export default function App() {
  return (
    <>
      <GlobalStyle />
      <Shell>
        <TitleBar as="header" $height={24} $pad={2} $muted>
          <AppMark />Cisco Packet Tracer - C:\Users\Bloodwayn\Desktop\Homework8\homework.pkt
          <WindowButtons color="#888" restore />
        </TitleBar>
        <MenuBar>
          {["File", "Edit", "Options", "View", "Tools", "Extensions", "Window", "Help"].map((m) => <MenuItem key={m}>{m}</MenuItem>)}
        </MenuBar>
        <ToolBar $height={35} $line><Tools items={mainTools} /><HelpButton>?</HelpButton></ToolBar>
        <ToolBar $height={34}><Tools items={drawTools} /></ToolBar>
        <NavyBar $height={31} $pad={0}>
          <Pill $on $pad={3}>
            <svg width="18" height="20" viewBox="0 0 18 20" fill="#fff"><path d="M3 12L9 4l6 12" stroke="#fff" strokeDasharray="2 1" fill="none" /><circle cx="3" cy="12" r="3" /><circle cx="9" cy="4" r="3" /><circle cx="15" cy="16" r="3" /></svg>
            <ModeText $bold>Logical</ModeText>
          </Pill>
          <Pill $pad={5}>
            <svg width="15" height="19" viewBox="0 0 15 19" fill="none" stroke="#8fa3c4"><path d="M1.500.5v18M13.500.5v18M1 1.500h13M1 5.500h13M1 9.500h13M1 13.500h13M1 17.500h13" /></svg>
            <ModeText>Physical</ModeText>
          </Pill>
          <Coordinates>x: 2969, y: 369</Coordinates>
          <RightGroup>
            <RootLabel>Root</RootLabel>
            <Pill $grey aria-label="Back"><svg width="22" height="18" viewBox="0 0 22 18"><path d="M6 5h8c7 0 7 10 0 10h-1" fill="none" stroke="#fff" strokeWidth="2.500" /><path d="M0 5l8-5v10z" fill="#fff" /></svg></Pill>
            <Pill aria-label="New cluster"><svg width="22" height="20" viewBox="0 0 22 20" fill="#fff"><path d="M5 14c-6 0-6-7-1-8 1-6 9-7 11-2 5 0 6 6 4 8h-5v2z" /><path d="M15 11h3v3h3v3h-3v3h-3v-3h-3v-3h3z" /></svg></Pill>
            <Pill $grey aria-label="Move object"><svg width="20" height="20" viewBox="0 0 20 20" fill="#fff"><path d="M10 0l3 5H7zM10 20l3-5H7zM0 10l5-3v6zM20 10l-5-3v6z" /><circle cx="10" cy="10" r="2" /></svg></Pill>
            <Pill aria-label="Background"><svg width="20" height="18" viewBox="0 0 20 18" fill="#fff"><path d="M0 18L7 7l4 5 2-2 5 8z" /><circle cx="17" cy="4" r="3" /></svg></Pill>
            <Pill $pad={3}>
              <svg width="20" height="20" viewBox="0 0 20 20" fill="none" stroke="#fff"><circle cx="7" cy="13" r="6" fill="#fff" /><path d="M1 13h12M7 7v12M3 9.500h8M3 16.500h8M4.500 8c-1 3-1 7 0 10M9.500 8c1 3 1 7 0 10" stroke={navy} strokeWidth=".8" /><path d="M11 2.500h9M10 7h9" strokeWidth="1.500" /><path d="M10 2.500l4-2.500v5zM20 7l-4-2.500v5z" fill="#fff" stroke="none" /></svg>
              16:20:30
            </Pill>
          </RightGroup>
        </NavyBar>
        <Workspace>
          <WorkRow>
            <Canvas>
              <Topology />
              <DeviceWindow name="PC0" url="http://index.ru" x={1379} w={805} h={791}><PortalPage /></DeviceWindow>
              <DeviceWindow name="PC1" url="https://index.ru" x={2222} w={741} h={789} active><YandexPage /></DeviceWindow>
            </Canvas>
            <Track $vertical $thick={17}>
              <TrackButton aria-label="Scroll up"><Chevron dir="up" /></TrackButton>
              <TrackBody $vertical><Thumb $share={27} /></TrackBody>
              <TrackButton aria-label="Scroll down"><Chevron dir="down" /></TrackButton>
            </Track>
          </WorkRow>
          <Track $thick={15}>
            <TrackButton aria-label="Scroll left"><Chevron dir="left" /></TrackButton>
            <TrackBody><Thumb $share={85.5} /></TrackBody>
            <TrackButton aria-label="Scroll right"><Chevron dir="right" /></TrackButton>
            <Track $thick={15} $vertical />
          </Track>
        </Workspace>
        <NavyBar $height={30} $pad={15}>
          Time: 06:48:50
          <Pill aria-label="Power cycle devices"><svg width="20" height="20" viewBox="0 0 20 20" fill="none" stroke="#fff" strokeWidth="2"><path d="M6 5a7 7 0 1 0 8 0" /><path d="M11 0v7L5 4z" fill="#fff" stroke="none" /><path d="M10 10v2" /></svg></Pill>
          <Pill aria-label="Fast forward"><svg width="18" height="12" viewBox="0 0 18 12" fill="#fff"><path d="M0 0l9 6-9 6zM9 0l9 6-9 6z" /></svg></Pill>
          <RightGroup>
            <Pill $on $pad={2}>
              <svg width="20" height="20" viewBox="0 0 20 20"><circle cx="10" cy="10" r="9.500" fill="#fff" /><path d="M10 4v7h2" fill="none" stroke="#047cac" strokeWidth="1.500" /></svg>
              <ModeText $bold>Realtime</ModeText>
            </Pill>
            <Pill $pad={3}>
              <svg width="20" height="20" viewBox="0 0 20 20" fill="#fff"><path d="M3 11c0-9 14-9 14 0v5H3z" /><path d="M0 16h20v3H0zM7 1h6v2H7z" /><path d="M10 7v5" stroke={navy} /></svg>
              <ModeText>Simulation</ModeText>
            </Pill>
          </RightGroup>
        </NavyBar>
        <Dock>
          <Categories>
            <CategoryRow>{categories.map((art, i) => <Category key={i} $on={i === 0} aria-label={`Category ${i + 1}`}>{art}</Category>)}</CategoryRow>
            <DeviceSearch aria-label="Search devices" />
            <CategoryRow>{subcategories.map((art, i) => <Category key={i} $on={i === 0} aria-label={`Subcategory ${i + 1}`}>{art}</Category>)}</CategoryRow>
          </Categories>
          <Devices>
            <DeviceGrid>{models.map((m) => <Model key={m} $long={m.length > 5}><DeviceArt kind="router" width={30} height={21} />{m}</Model>)}</DeviceGrid>
            <Track $thick={15}>
              <TrackButton aria-label="Scroll left"><Chevron dir="left" /></TrackButton>
              <TrackBody><Thumb $share={34.5} /></TrackBody>
              <TrackButton aria-label="Scroll right"><Chevron dir="right" /></TrackButton>
            </Track>
            <Selected>2620XM</Selected>
          </Devices>
          <Splitter aria-label="Collapse"><svg width="8" height="10"><path d="M0 0l8 5-8 5z" fill="#606060" /></svg></Splitter>
          <Scenario>
            <ScenarioRow $gap={6}>
              <NavyButton $h={30} aria-label="Scenario description"><svg width="16" height="16"><circle cx="8" cy="8" r="8" fill="#fff" /><path d="M8 4v2M8 7v5" stroke={navy} strokeWidth="1.500" /></svg></NavyButton>
              <ScenarioSelect aria-label="Scenario"><option>Scenario 0</option></ScenarioSelect>
            </ScenarioRow>
            <ScenarioRow $gap={18}><NavyButton $h={24}>New</NavyButton><NavyButton $h={24}>Delete</NavyButton></ScenarioRow>
            <NavyButton $h={24}>Toggle PDU List Window</NavyButton>
          </Scenario>
          <PduPane>
            <PduTable><thead><tr>{columns.map(([name, w]) => <PduHead key={name} $w={w}>{name}</PduHead>)}</tr></thead></PduTable>
          </PduPane>
        </Dock>
      </Shell>
    </>
  );
}
